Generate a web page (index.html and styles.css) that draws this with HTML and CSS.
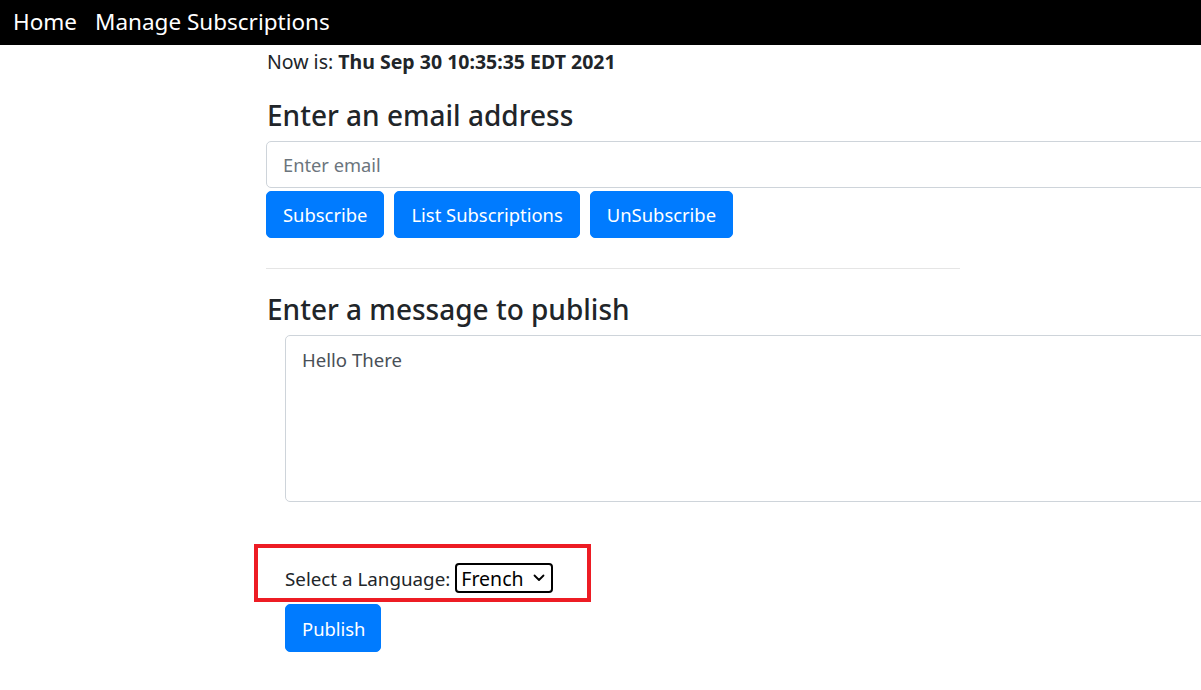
FILE: index.html
```html
<!DOCTYPE html>
<html>
<head>
<meta charset="utf-8">
<link rel="stylesheet" href="styles.css">
</head>
<body>
<nav class="navbar">
  <a class="nav-link" href="#">Home</a>
  <a class="nav-link" href="#">Manage Subscriptions</a>
</nav>
<main class="content">
  <p class="now">Now is: <b>Thu Sep 30 10:35:35 EDT 2021</b></p>
  <h3 class="heading first">Enter an email address</h3>
  <input class="field" type="text" placeholder="Enter email">
  <div class="btn-row">
    <button class="btn">Subscribe</button>
    <button class="btn">List Subscriptions</button>
    <button class="btn">UnSubscribe</button>
  </div>
  <hr class="divider">
  <h3 class="heading second">Enter a message to publish</h3>
  <div class="publish">
    <textarea class="message">Hello There</textarea>
    <div class="highlight">
      <label class="lang-label">Select a Language:</label>
      <span class="select-wrap">
        <select class="lang-select">
          <option>French</option>
        </select>
        <svg class="chevron" width="12" height="8" viewBox="0 0 12 8"><path d="M1.5 1.5 L6 6 L10.5 1.5" fill="none" stroke="#000" stroke-width="1.8" stroke-linecap="round" stroke-linejoin="round"/></svg>
      </span>
    </div>
    <button class="btn publish-btn">Publish</button>
  </div>
</main>
</body>
</html>
```
FILE: styles.css
```css
html, body {
  margin: 0;
  padding: 0;
  overflow: hidden;
  background: #fff;
}
body {
  font-family: "Noto Sans", "Open Sans", sans-serif;
  color: #212529;
  width: 1201px;
  height: 690px;
}
.navbar {
  background: #000;
  height: 45px;
  display: flex;
  align-items: center;
  padding-left: 13px;
  gap: 18px;
}
.nav-link {
  color: #fff;
  text-decoration: none;
  font-size: 22.5px;
  line-height: 1;
}
.content {
  padding-left: 266px;
}
.now {
  margin: 3px 0 0 1px;
  font-size: 19.5px;
  line-height: 27px;
}
.now b {
  font-weight: 700;
}
.heading {
  font-size: 28px;
  font-weight: 500;
  line-height: 34px;
  margin: 0 0 9px 1px;
}
.heading.first {
  margin-top: 23px;
}
.heading.second {
  margin-top: 23px;
}
.field {
  display: block;
  box-sizing: border-box;
  width: 1100px;
  height: 47px;
  border: 1px solid #ced4da;
  border-radius: 5px;
  padding: 0 16px;
  font-family: inherit;
  font-size: 18.3px;
  color: #495057;
  margin: 0;
}
.field::placeholder {
  color: #6c757d;
}
.btn-row {
  display: flex;
  gap: 10px;
  margin-top: 3px;
}
.btn {
  box-sizing: border-box;
  height: 47px;
  padding: 0 16px;
  border: 1px solid #007bff;
  background: #007bff;
  color: #fff;
  border-radius: 5px;
  font-family: inherit;
  font-size: 18.4px;
  line-height: 1;
  padding-top: 2px;
}
.divider {
  width: 694px;
  margin: 30px 0 0 0;
  border: 0;
  border-top: 1px solid #e5e5e5;
  height: 0;
}
.publish {
  padding-left: 19px;
}
.message {
  display: block;
  box-sizing: border-box;
  width: 1000px;
  height: 167px;
  border: 1px solid #ced4da;
  border-radius: 5px;
  padding: 9px 16px;
  font-family: inherit;
  font-size: 18.6px;
  line-height: 30px;
  color: #495057;
  resize: none;
  margin: 0;
}
.highlight {
  box-sizing: border-box;
  width: 337px;
  height: 58px;
  margin: 42px 0 0 -31px;
  border: 4px solid #ed1c24;
  display: flex;
  align-items: flex-end;
  padding: 0 0 5px 27px;
  gap: 5px;
}
.lang-label {
  font-size: 18.8px;
  line-height: 28px;
}
.select-wrap {
  position: relative;
  display: inline-block;
}
.lang-select {
  appearance: none;
  -webkit-appearance: none;
  box-sizing: border-box;
  width: 98px;
  height: 30px;
  border: 2px solid #000;
  border-radius: 4px;
  background: #fff;
  padding: 0 0 0 4px;
  font-family: inherit;
  font-size: 19.5px;
  color: #000;
  margin: 0;
  display: block;
}
.chevron {
  position: absolute;
  right: 8px;
  top: 11px;
  pointer-events: none;
}
.publish-btn {
  margin-top: 2px;
  width: 96px;
  height: 48px;
}
```
